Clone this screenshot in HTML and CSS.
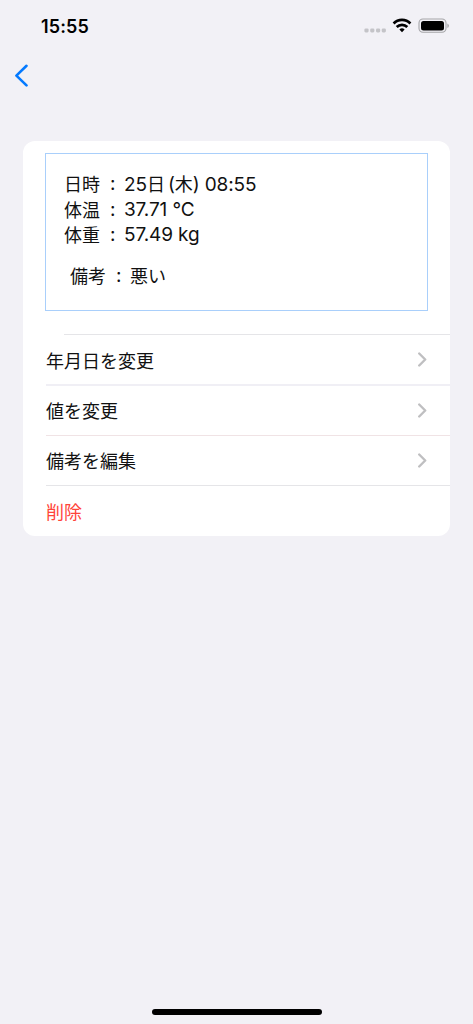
FILE: index.html
```html
<!DOCTYPE html>
<html lang="ja">
<head>
<meta charset="utf-8">
<meta name="viewport" content="width=device-width">
<title>記録</title>
<link rel="stylesheet" href="styles.css">
</head>
<body>
<div class="screen">
  <header class="status">
    <span class="time">15:55</span>
    <svg class="status-icons" width="86" height="20" viewBox="0 0 86 20">
      <g fill="#c4c4c8"><rect x="0.4" y="12.4" width="4.2" height="4" rx="1.3"/><rect x="6.2" y="12.4" width="4.2" height="4" rx="1.3"/><rect x="12" y="12.4" width="4.2" height="4" rx="1.3"/><rect x="17.7" y="12.4" width="4.2" height="4" rx="1.3"/></g>
      <g fill="none" stroke="#000" stroke-width="2.7"><path d="M29.6 7.5a11.7 11.7 0 0 1 16.8 0"/><path d="M32.7 11a7.5 7.5 0 0 1 10.6 0"/></g>
      <path d="M35.4 13.4a3.9 3.9 0 0 1 5.2 0L38 16.2z"/>
      <rect x="55" y="3" width="27" height="13.2" rx="4" fill="none" stroke="#a5a5a8" stroke-width="1.1"/>
      <rect x="57" y="4.9" width="23" height="9.5" rx="2.5"/>
      <path d="M83.4 7.4q1.5.6 1.5 2.3t-1.5 2.3z" fill="#a5a5a8"/>
    </svg>
  </header>
  <nav class="nav">
    <svg width="16" height="24" viewBox="0 0 16 24"><path d="M12.5 1.8 2.4 11.6l10.1 9.8" fill="none" stroke="#047aff" stroke-width="2.6" stroke-linecap="round" stroke-linejoin="round"/></svg>
  </nav>
  <main class="card">
    <section class="summary">
      <div class="line"><span class="label">日時</span><span class="colon">:</span><span>25<span class="kanji day">日</span>(<span class="kanji">木</span>) 08:55</span></div>
      <div class="line"><span class="label">体温</span><span class="colon">:</span><span>37.71 °C</span></div>
      <div class="line"><span class="label">体重</span><span class="colon">:</span><span>57.49 kg</span></div>
      <div class="line note"><span class="label">備考</span><span class="colon">:</span><span class="kanji">悪い</span></div>
    </section>
    <div class="row first"><span>年月日を変更</span><svg class="chevron" width="9" height="15" viewBox="0 0 9 15"><path d="m1.2 1.5 6 6-6 6"/></svg></div>
    <div class="row thick"><span>値を変更</span><svg class="chevron" width="9" height="15" viewBox="0 0 9 15"><path d="m1.2 1.5 6 6-6 6"/></svg></div>
    <div class="row warm"><span>備考を編集</span><svg class="chevron" width="9" height="15" viewBox="0 0 9 15"><path d="m1.2 1.5 6 6-6 6"/></svg></div>
    <div class="row delete"><span>削除</span></div>
  </main>
  <div class="home"></div>
</div>
</body>
</html>
```
FILE: styles.css
```css
* { box-sizing: border-box; }
body { margin: 0; background: #f2f1f6; color: #111; font-family: Inter, "Noto Sans CJK JP", sans-serif; }
.screen { height: 1024px; display: flex; flex-direction: column; }
.status { height: 64px; padding: 16px 23px 0 41px; display: flex; justify-content: space-between; align-items: flex-start; }
.time { font-size: 18px; line-height: 21px; font-weight: 600; letter-spacing: 0.15px; color: #000; }
.nav { height: 77px; padding: 0 14px; }
.nav svg { display: block; }
.card { width: 427px; height: 395px; margin-left: 23px; padding: 12px 0 0; background: #fff; border-radius: 12px; overflow: hidden; }
.summary { width: 383px; height: 158px; margin: 0 22px 23px; padding: 17px 18px 0; border: 1px solid #a9cffb; }
.line { height: 25.5px; display: flex; line-height: 25px; font-size: 19px; letter-spacing: -0.12px; white-space: pre; }
.label { width: 45px; }
.label, .kanji { font-family: "Noto Sans CJK JP", sans-serif; font-size: 18px; letter-spacing: 0; }
.colon { width: 15px; padding-left: 1px; }
.day { margin-right: 3px; }
.note { margin: 15px 0 0 6px; }
.row { height: 50.4px; margin-left: 23px; padding: 1px 23px 0 0; display: flex; align-items: center; justify-content: space-between; font-family: "Noto Sans CJK JP", sans-serif; font-size: 18px; background: linear-gradient(#e5e5e8, #e5e5e8) 0 0 / 100% 1px no-repeat; }
.first { background-position: 18px 0; }
.thick { background-image: linear-gradient(#f0eff5, #f0eff5); background-size: 100% 2px; }
.warm { background-image: linear-gradient(#f0e3e5, #f0e3e5); }
.delete { color: #ff443a; }
.chevron { fill: none; stroke: #bfbfc1; stroke-width: 2.4; stroke-linecap: round; stroke-linejoin: round; }
.home { width: 170px; height: 6px; margin: auto auto 9px 151.5px; border-radius: 3px; background: #000; }
```
